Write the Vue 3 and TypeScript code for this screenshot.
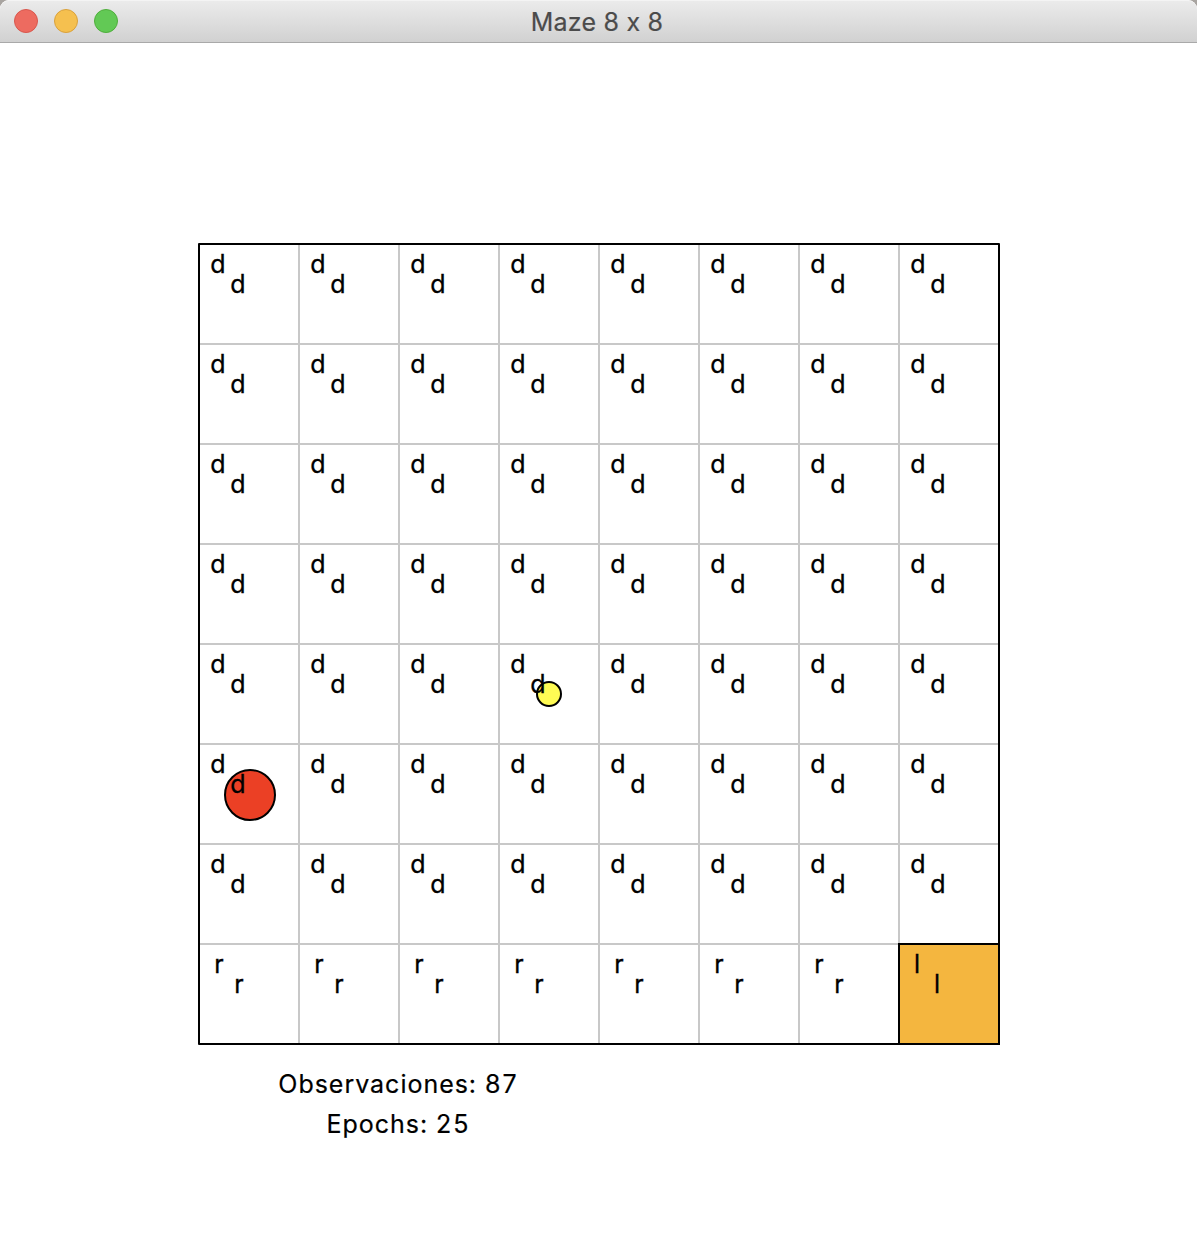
<script setup lang="ts">
type Action = 'd' | 'r' | 'l'

interface Cell {
  id: number
  action: Action
  goal: boolean
  ball: '' | 'agent' | 'marker'
}

const size = 8
const observations = 87
const epochs = 25

const cells: Cell[] = Array.from({ length: size * size }, (_, id) => {
  const row = Math.floor(id / size)
  const col = id % size
  const goal = row === size - 1 && col === size - 1
  const action: Action = goal ? 'l' : row === size - 1 ? 'r' : 'd'
  const ball = row === 5 && col === 0 ? 'agent' : row === 4 && col === 3 ? 'marker' : ''
  return { id, action, goal, ball }
})
</script>

<template>
  <div class="window">
    <header class="titlebar">
      <div class="lights">
        <span class="light close"></span>
        <span class="light minimize"></span>
        <span class="light zoom"></span>
      </div>
      <h1 class="title">Maze {{ size }} x {{ size }}</h1>
    </header>
    <main class="content">
      <div class="board">
        <div v-for="cell in cells" :key="cell.id" class="cell" :class="{ goal: cell.goal }">
          <span v-if="cell.ball" class="ball" :class="cell.ball"></span>
          <span class="label" :class="cell.action">{{ cell.action }}</span>
          <span class="label second" :class="cell.action">{{ cell.action }}</span>
        </div>
      </div>
      <div class="status">
        <p class="observations">Observaciones: <span class="count">{{ observations }}</span></p>
        <p class="epochs">Epochs: <span class="count">{{ epochs }}</span></p>
      </div>
    </main>
  </div>
</template>

<style>
body {
  margin: 0;
  background: #fff;
}
</style>

<style scoped>
.window {
  width: 1197px;
  height: 1238px;
  overflow: hidden;
  background: #fff;
  color: #000;
  font-family: Inter, 'Liberation Sans', sans-serif;
  font-size: 25px;
  font-feature-settings: 'calt' 0;
}
.titlebar {
  box-sizing: border-box;
  display: grid;
  grid-template-columns: 200px 1fr 200px;
  align-items: center;
  height: 43px;
  border-top: 1px solid #f4f4f4;
  border-bottom: 1px solid #a9a9a9;
  border-radius: 9px 9px 0 0;
  background: linear-gradient(#ebebeb, #d1d1d1);
  box-shadow: 0 0 0 9px #a8a4a0;
  clip-path: inset(0);
}
.lights {
  display: flex;
  gap: 16px;
  padding: 0 0 2px 14px;
}
.light {
  box-sizing: border-box;
  width: 24px;
  height: 24px;
  border: 1px solid;
  border-radius: 50%;
}
.close {
  background: #ed6b60;
  border-color: #d8574d;
}
.minimize {
  background: #f5c04f;
  border-color: #d9a13c;
}
.zoom {
  background: #62c955;
  border-color: #4fae3c;
}
.title {
  margin: 0;
  padding-right: 3px;
  color: #4b4b4b;
  font-size: 25px;
  font-weight: 400;
  line-height: 40px;
  letter-spacing: 0.22px;
  text-align: center;
  white-space: nowrap;
  -webkit-text-stroke: 0.2px;
}
.content {
  padding: 200px 0 0 198px;
}
.board {
  display: grid;
  grid-template: repeat(8, 98px) / repeat(8, 98px);
  gap: 2px;
  width: 798px;
  border: 2px solid #000;
  border-radius: 1px;
  background: #c8c8c8;
}
.cell {
  position: relative;
  background: #fff;
}
.goal {
  background: #f4b63f;
  box-shadow: 0 0 0 2px #000;
}
.label {
  position: relative;
  display: block;
  width: 36px;
  height: 20px;
  padding-top: 9px;
  margin-bottom: -9px;
  line-height: 20px;
  text-align: center;
  -webkit-text-stroke: 0.3px;
}
.second {
  margin-left: 20px;
}
.label.r {
  text-indent: 2px;
}
.label.l {
  text-indent: -2px;
}
.ball {
  position: absolute;
  box-sizing: border-box;
  border: 2px solid #000;
  border-radius: 50%;
}
.agent {
  left: 24px;
  top: 24px;
  width: 52px;
  height: 52px;
  background: #eb4025;
}
.marker {
  left: 36px;
  top: 36px;
  width: 26px;
  height: 26px;
  background: #fffb54;
}
.status {
  width: 401px;
  padding-top: 19px;
  text-align: center;
}
.status p {
  margin: 0;
  line-height: 40px;
  letter-spacing: 0.98px;
  -webkit-text-stroke: 0.2px;
}
.status .count {
  letter-spacing: 2px;
}
</style>
